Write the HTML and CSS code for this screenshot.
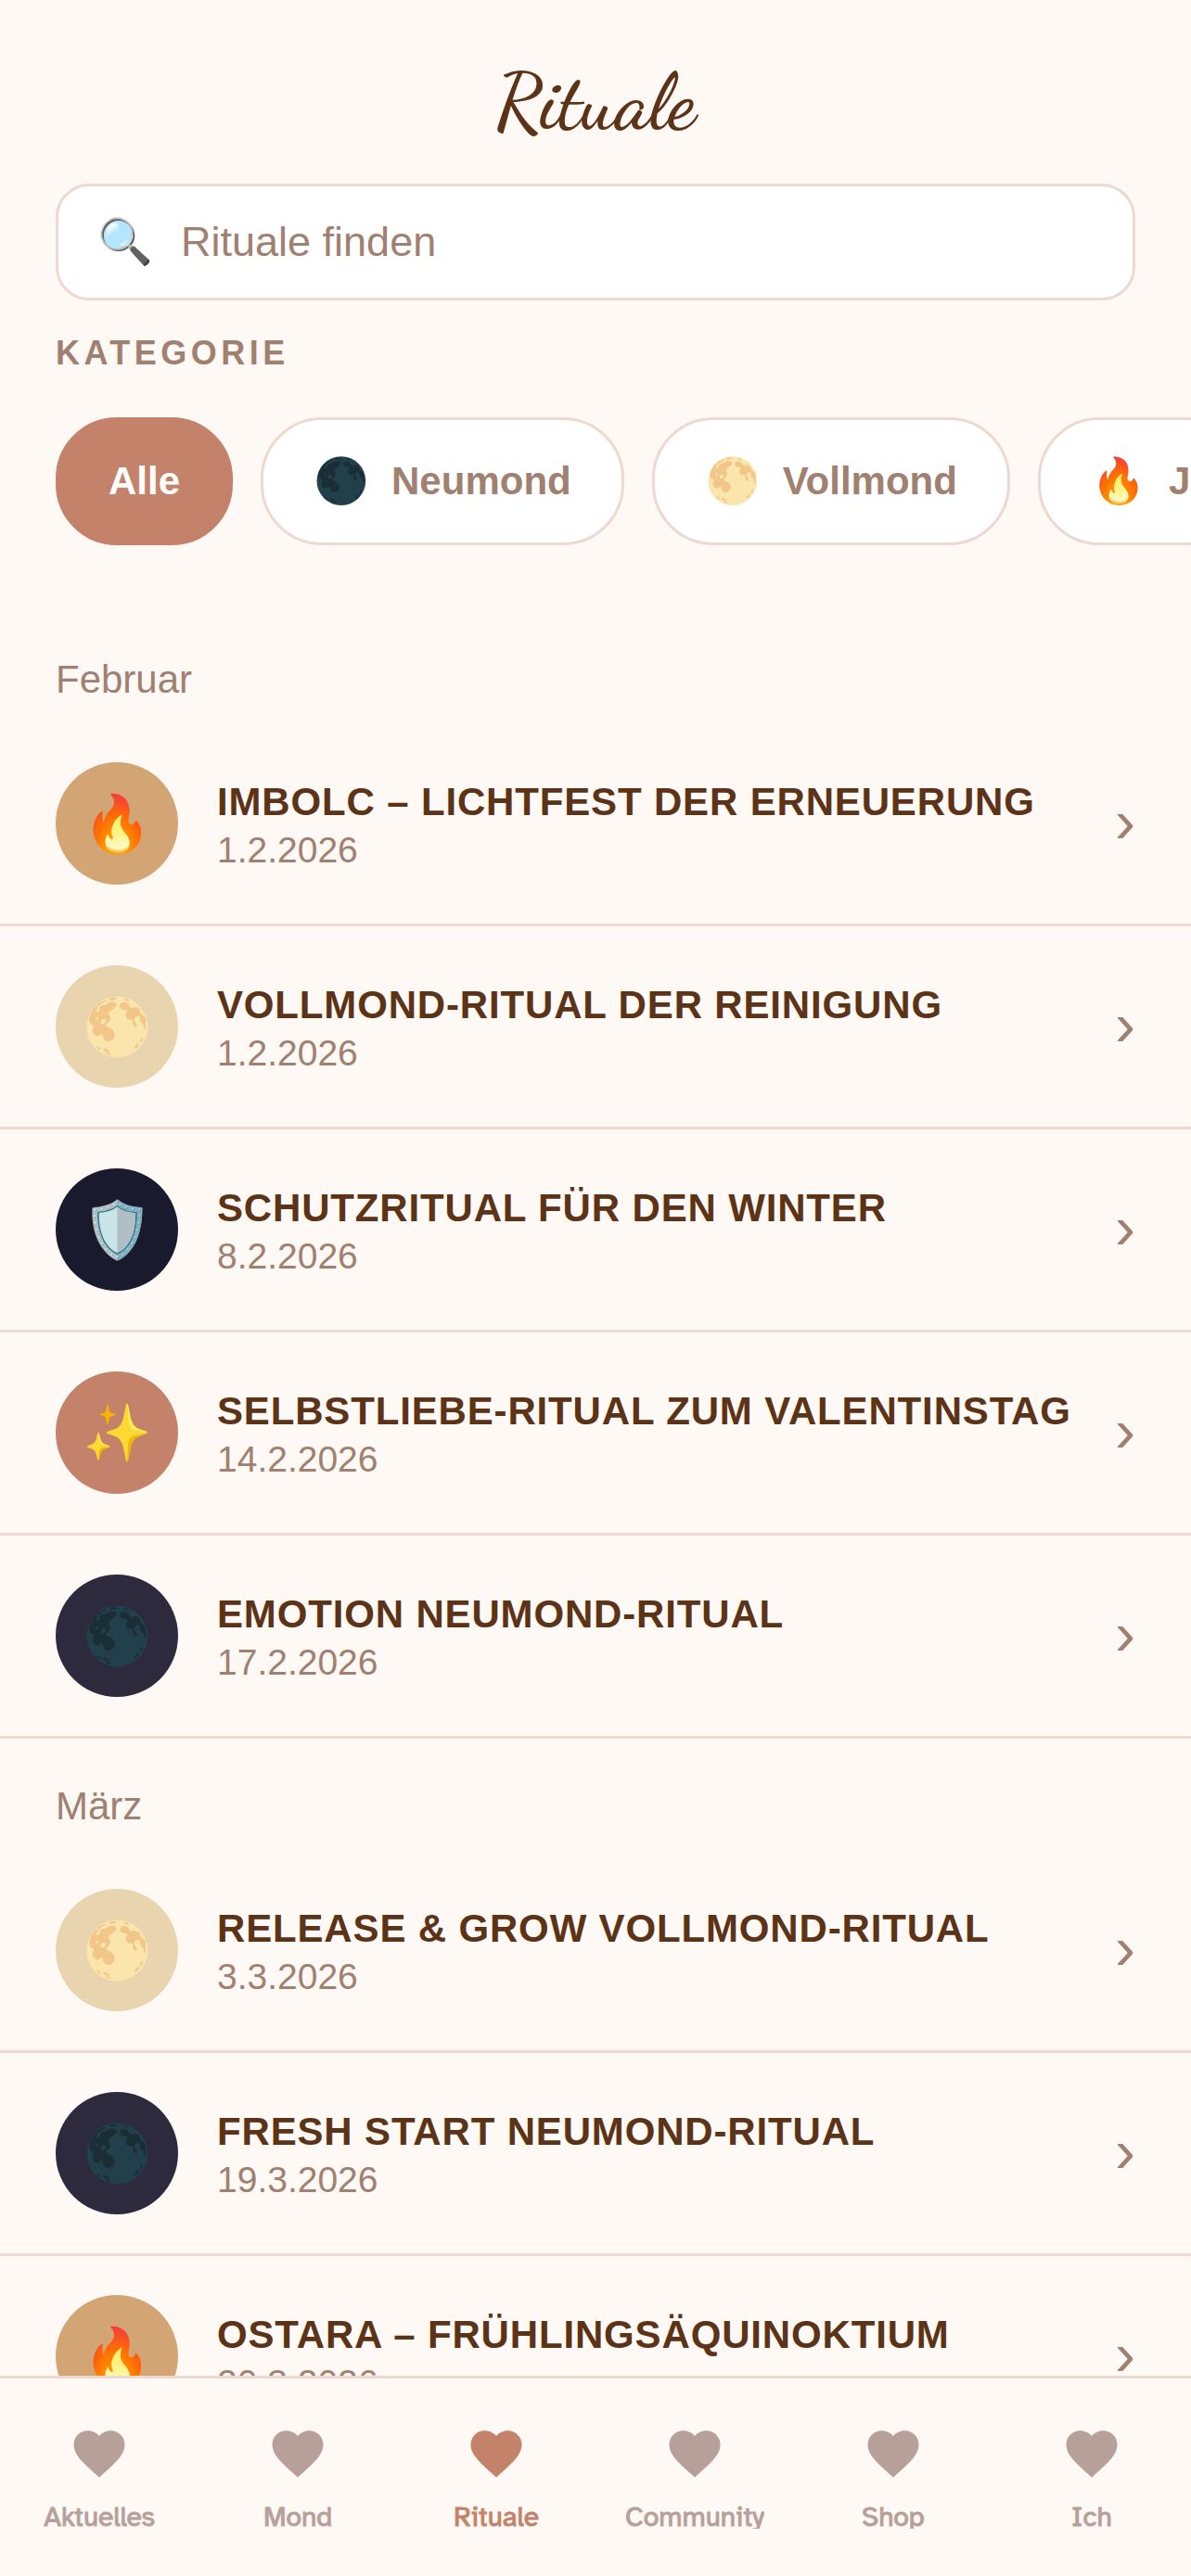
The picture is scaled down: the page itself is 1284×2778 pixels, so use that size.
FILE: index.html
```html
<!DOCTYPE html>
<html lang="de">

<head>
  <meta charset="UTF-8" />
  <meta name="viewport" content="width=device-width, initial-scale=1.0" />
  <title>Rituale</title>
  <link rel="stylesheet" href="styles.css">
</head>

<body>
  <main class="content">
    <header class="header">
      <h1>Rituale</h1>
      <label class="search">
        <span class="emoji">🔍</span>
        <input type="search" name="search" placeholder="Rituale finden" aria-label="Rituale finden" />
      </label>
      <h2 class="category">Kategorie</h2>
    </header>

    <div class="chips">
      <button type="button" class="chip active">Alle</button>
      <button type="button" class="chip"><span class="emoji">🌑</span>Neumond</button>
      <button type="button" class="chip"><span class="emoji">🌕</span>Vollmond</button>
      <button type="button" class="chip"><span class="emoji">🔥</span>Jahreskreis</button>
    </div>

    <section>
      <h3 class="month">Februar</h3>
      <a class="ritual" href="#">
        <span class="icon fire">🔥</span>
        <span class="info"><strong>Imbolc – Lichtfest der Erneuerung</strong><time>1.2.2026</time></span>
        <span class="arrow">›</span>
      </a>
      <a class="ritual" href="#">
        <span class="icon full">🌕</span>
        <span class="info"><strong>Vollmond-Ritual der Reinigung</strong><time>1.2.2026</time></span>
        <span class="arrow">›</span>
      </a>
      <a class="ritual" href="#">
        <span class="icon shield">🛡️</span>
        <span class="info"><strong>Schutzritual für den Winter</strong><time>8.2.2026</time></span>
        <span class="arrow">›</span>
      </a>
      <a class="ritual" href="#">
        <span class="icon love">✨</span>
        <span class="info"><strong>Selbstliebe-Ritual zum Valentinstag</strong><time>14.2.2026</time></span>
        <span class="arrow">›</span>
      </a>
      <a class="ritual" href="#">
        <span class="icon new">🌑</span>
        <span class="info"><strong>Emotion Neumond-Ritual</strong><time>17.2.2026</time></span>
        <span class="arrow">›</span>
      </a>
    </section>

    <section>
      <h3 class="month">März</h3>
      <a class="ritual" href="#">
        <span class="icon full">🌕</span>
        <span class="info"><strong>Release &amp; Grow Vollmond-Ritual</strong><time>3.3.2026</time></span>
        <span class="arrow">›</span>
      </a>
      <a class="ritual" href="#">
        <span class="icon new">🌑</span>
        <span class="info"><strong>Fresh Start Neumond-Ritual</strong><time>19.3.2026</time></span>
        <span class="arrow">›</span>
      </a>
      <a class="ritual" href="#">
        <span class="icon fire">🔥</span>
        <span class="info"><strong>Ostara – Frühlingsäquinoktium</strong><time>20.3.2026</time></span>
        <span class="arrow">›</span>
      </a>
    </section>
  </main>

  <svg class="symbols" aria-hidden="true">
    <symbol id="heart" viewBox="0 0 24 24">
      <path d="M12 21.35l-1.45-1.32C5.4 15.36 2 12.28 2 8.5 2 5.42 4.42 3 7.5 3c1.74 0 3.41.81 4.5 2.09C13.09 3.81 14.76 3 16.5 3 19.58 3 22 5.42 22 8.5c0 3.78-3.4 6.86-8.55 11.54L12 21.35z" />
    </symbol>
  </svg>

  <nav class="tabs">
    <a href="#"><svg><use href="#heart" /></svg><span>Aktuelles</span></a>
    <a href="#"><svg><use href="#heart" /></svg><span>Mond</span></a>
    <a href="#" class="active"><svg><use href="#heart" /></svg><span>Rituale</span></a>
    <a href="#"><svg><use href="#heart" /></svg><span>Community</span></a>
    <a href="#"><svg><use href="#heart" /></svg><span>Shop</span></a>
    <a href="#"><svg><use href="#heart" /></svg><span>Ich</span></a>
  </nav>
</body>

</html>
```
FILE: styles.css
```css
* {
  margin: 0;
  padding: 0;
  box-sizing: border-box;
}

body {
  height: 100vh;
  display: flex;
  flex-direction: column;
  overflow: hidden;
  background-color: #fef9f5;
  color: #a08070;
  font-family: "Liberation Sans", Arial, sans-serif;
}

a {
  color: inherit;
  text-decoration: none;
}

.content {
  flex: 1;
  min-height: 0;
  overflow: hidden;
}

.header {
  padding: 60px 60px 0;
}

.header h1 {
  margin-bottom: 36px;
  text-align: center;
  font-family: "Dancing Script", cursive;
  font-size: 84px;
  font-weight: 600;
  line-height: 102px;
  color: #5c3317;
}

.search {
  display: flex;
  align-items: center;
  gap: 30px;
  padding: 30px 42px;
  border: 3px solid #edd9d0;
  border-radius: 36px;
  background-color: #fff;
}

.emoji {
  font-size: 48px;
  font-weight: normal;
  line-height: 60px;
}

.search input {
  flex: 1;
  min-width: 0;
  height: 60px;
  border: none;
  outline: none;
  background: transparent;
  font-family: inherit;
  font-size: 45px;
  color: #5c3317;
}

.search input::placeholder {
  color: #a08070;
  opacity: 1;
}

.category {
  margin: 36px 0 48px;
  font-size: 36px;
  line-height: 42px;
  letter-spacing: 0.125em;
  text-transform: uppercase;
}

.chips {
  display: flex;
  gap: 30px;
  padding: 0 60px;
  margin-bottom: 72px;
  overflow: hidden;
}

.chip {
  display: flex;
  flex-shrink: 0;
  align-items: center;
  gap: 24px;
  padding: 36px 54px;
  border: 3px solid #edd9d0;
  border-radius: 66px;
  background-color: #fff;
  color: #a08070;
  font-family: inherit;
  font-size: 42px;
  font-weight: bold;
  line-height: 60px;
  cursor: pointer;
}

.chip.active {
  border-color: #c4826a;
  background-color: #c4826a;
  color: #fff;
}

.month {
  padding: 48px 60px 22px;
  font-size: 42px;
  font-weight: normal;
  line-height: 50px;
}

.ritual {
  display: flex;
  align-items: center;
  padding: 42px 60px;
  border-bottom: 3px solid #edd9d0;
}

.icon {
  display: flex;
  align-items: center;
  justify-content: center;
  width: 132px;
  height: 132px;
  margin-right: 42px;
  border-radius: 50%;
  font-size: 60px;
}

.fire {
  background-color: #d4a574;
}

.full {
  background-color: #e8d5b0;
}

.shield {
  background-color: #1a1a2e;
}

.love {
  background-color: #c4826a;
}

.new {
  background-color: #2d2a3e;
}

.info {
  flex: 1;
  display: flex;
  flex-direction: column;
}

.info strong {
  font-size: 42px;
  line-height: 58px;
  letter-spacing: 0.02em;
  text-transform: uppercase;
  color: #5c3317;
}

.info time {
  font-size: 39px;
  line-height: 46px;
}

.arrow {
  padding-bottom: 4px;
  font-size: 66px;
}

.symbols {
  display: none;
}

.tabs {
  display: flex;
  padding: 48px 0 51px;
  border-top: 3px solid #edd9d0;
  color: #b8a09a;
  font-family: "Atkinson Hyperlegible", "Noto Sans", sans-serif;
  font-size: 30px;
  font-weight: 500;
}

.tabs a {
  flex: 1;
  display: flex;
  flex-direction: column;
  align-items: center;
  gap: 22px;
}

.tabs svg {
  width: 66px;
  height: 66px;
  fill: currentColor;
}

.tabs span {
  height: 26px;
  line-height: 26px;
  overflow: hidden;
  -webkit-text-stroke: 1px currentColor;
}

.tabs .active {
  color: #c4826a;
}
```
